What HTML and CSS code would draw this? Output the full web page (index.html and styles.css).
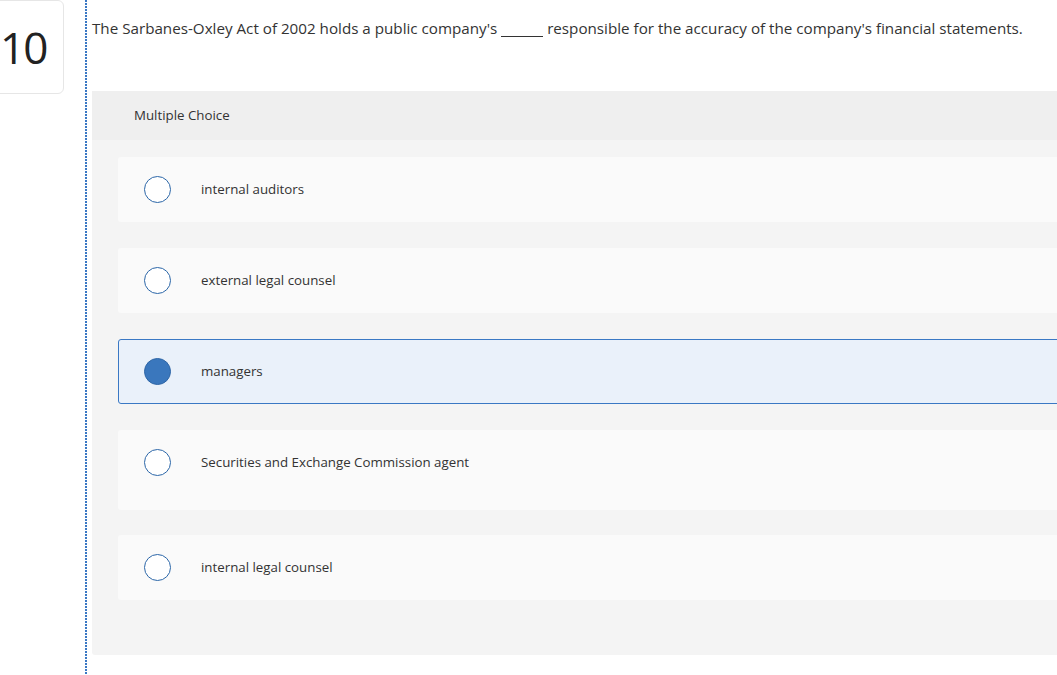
FILE: index.html
```html
<!DOCTYPE html>
<html lang="en">
<head>
<meta charset="utf-8">
<title>Question 10</title>
<link rel="stylesheet" href="styles.css">
</head>
<body>
<div class="page">
  <aside class="num-col">
    <div class="num-card">10</div>
  </aside>
  <main class="q-col">
    <p class="prompt">The Sarbanes-Oxley Act of 2002 holds a public company's <span class="blank"></span> responsible for the accuracy of the company's financial statements.</p>
    <section class="panel">
      <header class="panel-head">Multiple Choice</header>
      <div class="panel-body">
        <div class="option"><span class="radio"></span><span class="label">internal auditors</span></div>
        <div class="option"><span class="radio"></span><span class="label">external legal counsel</span></div>
        <div class="option selected"><span class="radio"></span><span class="label">managers</span></div>
        <div class="option tall"><span class="radio"></span><span class="label">Securities and Exchange Commission agent</span></div>
        <div class="option"><span class="radio"></span><span class="label">internal legal counsel</span></div>
      </div>
    </section>
  </main>
</div>
</body>
</html>
```
FILE: styles.css
```css
html, body {
  margin: 0;
  padding: 0;
  background: #ffffff;
  overflow: hidden;
}
body {
  font-family: "Open Sans", "Liberation Sans", sans-serif;
  color: #333333;
}
.page {
  display: flex;
  width: 1100px;
  height: 675px;
}
.num-col {
  width: 85px;
  flex: none;
}
.num-card {
  width: 62px;
  height: 92px;
  margin-left: -10px;
  padding-left: 10px;
  border: 1px solid #e6e6e6;
  border-radius: 6px;
  box-sizing: content-box;
  font-family: "Open Sans", sans-serif;
  font-size: 44px;
  line-height: 92px;
  color: #222222;
  letter-spacing: -2px;
  text-indent: -1px;
}
.q-col {
  flex: 1;
  padding-left: 7px;
  background: linear-gradient(#3a78c4 67%, transparent 67%) 0 0 / 2px 3px repeat-y;
}
.prompt {
  margin: 0;
  padding-top: 18px;
  height: 91px;
  box-sizing: border-box;
  font-size: 15.2px;
  line-height: 20px;
  color: #333333;
  white-space: nowrap;
}
.blank {
  display: inline-block;
  width: 42px;
  border-bottom: 1px solid #333333;
  vertical-align: -3px;
}
.panel {
  border-radius: 0 0 0 3px;
  overflow: hidden;
  background: #f4f4f4;
}
.panel-head {
  height: 49px;
  background: #efefef;
  padding-left: 42px;
  font-size: 13.3px;
  line-height: 49px;
  color: #333333;
}
.panel-body {
  padding: 17px 0 55px 26px;
  display: flex;
  flex-direction: column;
  gap: 26px;
}
.option {
  height: 65px;
  box-sizing: border-box;
  background: #fafafa;
  border-radius: 3px;
  display: flex;
  align-items: center;
  padding-left: 26px;
  font-size: 13.3px;
  color: #333333;
}
.option.tall {
  height: 80px;
  align-items: flex-start;
  padding-top: 19px;
}
.option.tall + .option {
  margin-top: -1px;
}
.option.selected {
  background: #eaf1fa;
  border: 1px solid #3a78c4;
  padding-left: 25px;
}
.radio {
  width: 27px;
  height: 27px;
  box-sizing: border-box;
  border: 1.5px solid #2b66a8;
  border-radius: 50%;
  background: #ffffff;
  flex: none;
  margin-right: 30px;
}
.selected .radio {
  background: #3a77bd;
  border-color: #2f66a6;
}
.label {
  line-height: 27px;
}
```
